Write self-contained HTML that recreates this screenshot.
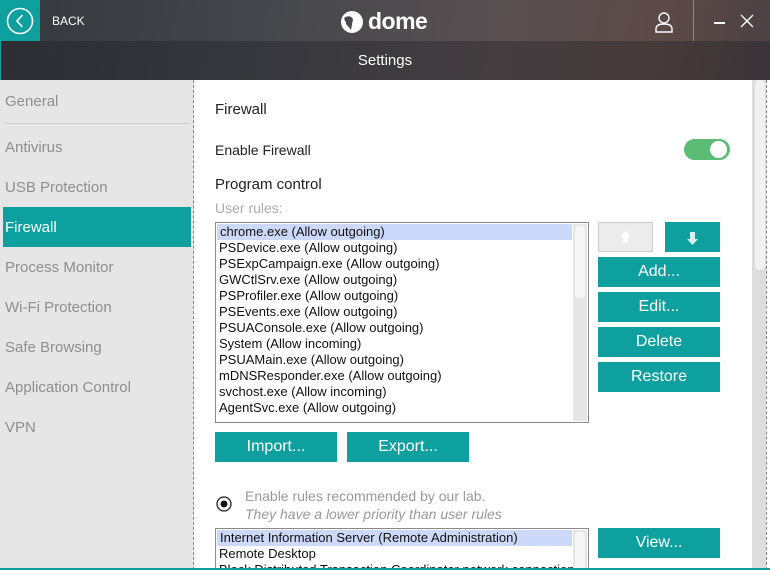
<!DOCTYPE html>
<html><head><style>
*{margin:0;padding:0;box-sizing:border-box}
html,body{width:770px;height:570px;overflow:hidden}
body{font-family:"Liberation Sans",sans-serif;position:relative;background:#fff}
.hdr{position:absolute;left:0;top:0;width:770px;height:80px;background:linear-gradient(100deg,#34373c 0%,#45474c 35%,#5a5052 65%,#5c4a47 85%,#4b4043 100%)}
.bar{position:absolute;left:0;top:41px;width:770px;height:39px;background:rgba(30,30,35,0.35);color:#fff;font-size:15px;text-align:center;line-height:39px}
.back{position:absolute;left:0;top:0;width:40px;height:41px;background:#0ea09e}
.abs{position:absolute}
.side{position:absolute;left:0;top:80px;width:194px;height:490px;background:#e6e6e6;border-right:1px dashed #888}
.side div{position:absolute;left:5px;font-size:15px;color:#8e8e8e}
.tbtn{position:absolute;background:#0ea09e;color:#fff;font-size:16px;text-align:center}
.list{position:absolute;border:1px solid #8a8a8a;background:#fff;font-size:13px;color:#111}
.list p{height:16px;line-height:16px;padding-left:3px;white-space:nowrap}
</style></head><body>
<div class="hdr"></div>
<div class="back"><svg width="40" height="41"><circle cx="20" cy="21" r="12.5" fill="none" stroke="#fff" stroke-width="1.6"/><path d="M22.5 15 L17 21 L22.5 27" fill="none" stroke="#fff" stroke-width="1.6"/></svg></div>
<div class="abs" style="left:52px;top:14px;color:#fff;font-size:12px">BACK</div>
<svg class="abs" style="left:338px;top:8px" width="30" height="28"><circle cx="14" cy="14" r="11" fill="#fff"/><path d="M6 10 Q12 6 15 11 L13 22 Q10 18 8 16Z" fill="#4a4a4e"/><circle cx="6" cy="15" r="2" fill="#fff"/></svg>
<div class="abs" style="left:368px;top:8px;color:#fff;font-size:23px;font-weight:bold;letter-spacing:-0.5px;line-height:26px">dome</div>
<svg class="abs" style="left:652px;top:10px" width="24" height="24"><circle cx="12" cy="8" r="5" fill="none" stroke="#fff" stroke-width="1.4"/><path d="M4 22 L4 19 Q4 14 12 14 Q20 14 20 19 L20 22Z" fill="none" stroke="#fff" stroke-width="1.4"/></svg>
<div class="abs" style="left:693px;top:0;width:1px;height:41px;background:#888"></div>
<div class="abs" style="left:714px;top:22px;width:11px;height:1.5px;background:#fff"></div>
<svg class="abs" style="left:740px;top:14px" width="14" height="14"><path d="M1 1L13 13M13 1L1 13" stroke="#fff" stroke-width="1.4"/></svg>
<div class="bar">Settings</div>
<div class="abs" style="left:0;top:0;width:1px;height:570px;background:#0ea09e"></div>
<div class="side">
<div style="top:13px">General</div>
<div style="left:5px;top:43px;width:184px;height:1px;background:#ccc"></div>
<div style="top:59px">Antivirus</div>
<div style="top:99px">USB Protection</div>
<div style="left:3px;top:127px;width:188px;height:40px;background:#0ea09e;color:#fff;padding:12px 2px;">Firewall</div>
<div style="top:179px">Process Monitor</div>
<div style="top:219px">Wi-Fi Protection</div>
<div style="top:259px">Safe Browsing</div>
<div style="top:299px">Application Control</div>
<div style="top:339px">VPN</div>
</div>
<div class="abs" style="left:752px;top:80px;width:14px;height:490px;background:#ddd"></div>
<div class="abs" style="left:755px;top:80px;width:10px;height:190px;background:#f2f2f2;border-radius:4px"></div>
<div class="abs" style="left:766px;top:80px;width:1px;height:490px;border-left:1px dashed #888"></div>
<div class="abs" style="left:215px;top:101px;font-size:15px;color:#222">Firewall</div>
<div class="abs" style="left:215px;top:142px;font-size:14px;color:#222">Enable Firewall</div>
<div class="abs" style="left:684px;top:139px;width:46px;height:21px;border-radius:11px;background:#5cbb75"><div style="position:absolute;right:3px;top:2px;width:17px;height:17px;border-radius:50%;background:#fff"></div></div>
<div class="abs" style="left:215px;top:176px;font-size:15px;color:#222">Program control</div>
<div class="abs" style="left:215px;top:200px;font-size:14px;color:#aaa">User rules:</div>
<div class="list" style="left:215px;top:222px;width:374px;height:201px">
<div style="position:absolute;right:1px;top:1px;width:14px;height:197px;background:#e6e6e6"><div style="margin:2px 2px;height:72px;background:#f6f6f6;border-radius:4px"></div></div>
<p style="background:#cdd9fb;margin:1px 16px 0 1px">chrome.exe (Allow outgoing)</p>
<p>PSDevice.exe (Allow outgoing)</p><p>PSExpCampaign.exe (Allow outgoing)</p><p>GWCtlSrv.exe (Allow outgoing)</p><p>PSProfiler.exe (Allow outgoing)</p><p>PSEvents.exe (Allow outgoing)</p><p>PSUAConsole.exe (Allow outgoing)</p><p>System (Allow incoming)</p><p>PSUAMain.exe (Allow outgoing)</p><p>mDNSResponder.exe (Allow outgoing)</p><p>svchost.exe (Allow incoming)</p><p>AgentSvc.exe (Allow outgoing)</p>
</div>
<div class="abs" style="left:598px;top:222px;width:55px;height:30px;background:#ececec;border:1px solid #ccc"><svg width="53" height="28"><path d="M26.5 8 L32 14 L29 14 L29 20 L24 20 L24 14 L21 14Z" fill="#fff"/></svg></div>
<div class="tbtn" style="left:665px;top:222px;width:55px;height:30px"><svg width="55" height="30"><path d="M27.5 23 L33 17 L30 17 L30 10 L25 10 L25 17 L22 17Z" fill="#d8f0ef"/></svg></div>
<div class="tbtn" style="left:598px;top:257px;width:122px;height:30px;line-height:30px">Add...</div>
<div class="tbtn" style="left:598px;top:292px;width:122px;height:30px;line-height:30px">Edit...</div>
<div class="tbtn" style="left:598px;top:327px;width:122px;height:30px;line-height:30px">Delete</div>
<div class="tbtn" style="left:598px;top:362px;width:122px;height:30px;line-height:30px">Restore</div>
<div class="tbtn" style="left:215px;top:432px;width:122px;height:30px;line-height:30px">Import...</div>
<div class="tbtn" style="left:347px;top:432px;width:122px;height:30px;line-height:30px">Export...</div>
<svg class="abs" style="left:215px;top:495px" width="18" height="18"><circle cx="9" cy="9" r="7" fill="none" stroke="#222" stroke-width="1.3"/><circle cx="9" cy="9" r="3.5" fill="#111"/></svg>
<div class="abs" style="left:245px;top:488px;font-size:14px;color:#999">Enable rules recommended by our lab.</div>
<div class="abs" style="left:245px;top:506px;font-size:14px;color:#999;font-style:italic">They have a lower priority than user rules</div>
<div class="list" style="left:215px;top:528px;width:374px;height:42px;overflow:hidden;border-bottom:none">
<div style="position:absolute;right:1px;top:1px;width:14px;height:50px;background:#e6e6e6"><div style="margin:2px;height:40px;background:#f6f6f6;border-radius:4px"></div></div>
<p style="background:#cdd9fb;margin:1px 16px 0 1px">Internet Information Server (Remote Administration)</p>
<p>Remote Desktop</p><p>Block Distributed Transaction Coordinator network connections</p>
</div>
<div class="tbtn" style="left:598px;top:528px;width:122px;height:30px;line-height:30px">View...</div>
<div class="abs" style="left:0;top:568px;width:770px;height:2px;background:#0ea09e"></div>
</body></html>
